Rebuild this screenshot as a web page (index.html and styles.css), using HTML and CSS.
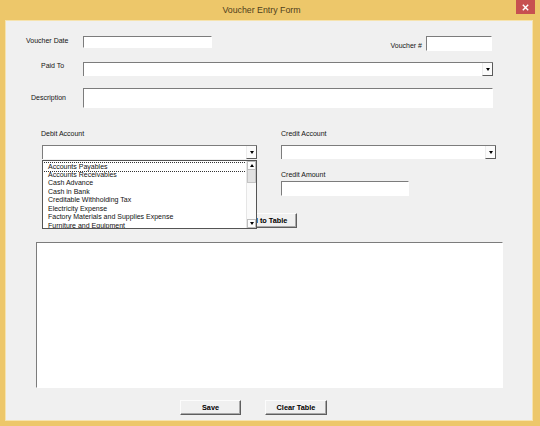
FILE: index.html
```html
<!DOCTYPE html>
<html>
<head>
<meta charset="utf-8">
<link rel="stylesheet" href="styles.css">
</head>
<body>
<div class="window">
  <div class="titlebar">
    <span class="title">Voucher Entry Form</span>
    <span class="close"><svg width="7" height="7" viewBox="0 0 7 7"><path d="M0.8 0.8 L6.2 6.2 M6.2 0.8 L0.8 6.2" stroke="#fff" stroke-width="1.4" fill="none"/></svg></span>
  </div>
  <div class="client">
    <div class="row r1">
      <span class="lbl lbl-vdate">Voucher Date</span>
      <div class="textbox tb-vdate"></div>
      <span class="lbl lbl-vno">Voucher #</span>
      <div class="textbox tb-vno"></div>
    </div>
    <div class="row r2">
      <span class="lbl lbl-paid">Paid To</span>
      <div class="combo cb-paid"><div class="cb-btn"><i class="tri-down"></i></div></div>
    </div>
    <div class="row r3">
      <span class="lbl lbl-desc">Description</span>
      <div class="textbox tb-desc"></div>
    </div>
    <div class="row r4">
      <span class="lbl lbl-debit">Debit Account</span>
      <span class="lbl">Credit Account</span>
    </div>
    <div class="row r5">
      <div class="combo cb-debit"><div class="cb-btn"><i class="tri-down"></i></div></div>
      <div class="combo cb-credit"><div class="cb-btn"><i class="tri-down"></i></div></div>
    </div>
    <div class="row r6">
      <span class="lbl">Credit Amount</span>
    </div>
    <div class="row r6b">
      <div class="textbox tb-amount"></div>
    </div>
    <div class="row r7">
      <div class="btn btn-add">Add to Table</div>
    </div>
    <div class="row r8">
      <div class="listbox"></div>
    </div>
    <div class="row r9">
      <div class="btn btn-save">Save</div>
      <div class="btn btn-clear">Clear Table</div>
    </div>

    <div class="dropdown">
      <ul class="items">
        <li class="focused">Accounts Payables</li>
        <li>Accounts Receivables</li>
        <li>Cash Advance</li>
        <li>Cash in Bank</li>
        <li>Creditable Withholding Tax</li>
        <li>Electricity Expense</li>
        <li>Factory Materials and Supplies Expense</li>
        <li>Furniture and Equipment</li>
      </ul>
      <div class="sb">
        <div class="sb-btn"><i class="tri-up"></i></div>
        <div class="sb-thumb"></div>
        <div class="sb-track"></div>
        <div class="sb-btn"><i class="tri-down"></i></div>
      </div>
    </div>
  </div>
</div>
</body>
</html>
```

FILE: styles.css
```css
* { box-sizing: border-box; }
html, body { margin: 0; padding: 0; }
body {
  width: 540px;
  height: 426px;
  overflow: hidden;
  font-family: "Liberation Sans", Arial, sans-serif;
  font-size: 7px;
  color: #141414;
  background: #edc76a;
}
.window {
  width: 540px;
  height: 426px;
  display: flex;
  flex-direction: column;
  background: #edc76a;
}
.titlebar {
  height: 20px;
  display: flex;
  align-items: flex-start;
}
.title {
  flex: 1;
  text-align: center;
  padding-left: 7px;
  font-size: 8.8px;
  line-height: 20px;
  color: #4f401c;
}
.close {
  width: 19px;
  height: 14px;
  margin-right: 5px;
  background: #c75050;
  display: flex;
  align-items: center;
  justify-content: center;
}
.close svg { display: block; }
.client {
  position: relative;
  height: 401px;
  margin: 0 7px 0 5px;
  background: #f0f0f0;
  box-shadow: inset 0 0 0 1px #f6e3ae;
  display: flex;
  flex-direction: column;
}
.row {
  display: flex;
  align-items: flex-start;
  flex: none;
}
.lbl {
  display: block;
  line-height: 12px;
  white-space: nowrap;
  flex: none;
}
.textbox, .combo, .listbox {
  background: #fff;
  border-style: solid;
  border-width: 1px;
  border-color: #7c7c7c #fff #fff #7c7c7c;
  flex: none;
}
.combo {
  display: flex;
  justify-content: flex-end;
  border-right: 0;
  border-bottom: 0;
}
.cb-btn {
  width: 11px;
  height: 100%;
  border-left: 1px solid #ececec;
  border-right: 1px solid #5a5a5a;
  border-bottom: 1px solid #5a5a5a;
  display: flex;
  align-items: center;
  justify-content: center;
  background: #fbfbfb;
}
.tri-down, .tri-up {
  display: block;
  width: 0;
  height: 0;
  border-left: 2.5px solid transparent;
  border-right: 2.5px solid transparent;
}
.tri-down { border-top: 3px solid #000; }
.tri-up { border-bottom: 3px solid #000; }

/* row 1 */
.r1 { margin-top: 16px; height: 14px; }
.lbl-vdate { margin-left: 21px; width: 57px; margin-top: -1.5px; }
.tb-vdate { width: 129px; height: 12px; }
.lbl-vno { width: 210px; text-align: right; margin-top: 3.7px; }
.tb-vno { margin-left: 4px; width: 66px; height: 15px; }

/* row 2 */
.r2 { margin-top: 12px; height: 14px; }
.lbl-paid { margin-left: 36px; width: 42px; margin-top: -2px; }
.cb-paid { width: 410px; height: 14px; }

/* row 3 */
.r3 { margin-top: 12px; height: 20px; }
.lbl-desc { margin-left: 26px; width: 52px; margin-top: 3.7px; }
.tb-desc { width: 410px; height: 20px; }

/* row 4 */
.r4 { margin-top: 20px; height: 12px; }
.lbl-debit { margin-left: 36px; width: 240px; }

/* row 5 */
.r5 { margin-top: 5px; height: 14px; }
.cb-debit { margin-left: 37px; width: 215px; height: 14px; }
.cb-credit { margin-left: 24px; width: 215px; height: 14px; }

/* row 6 */
.r6 { margin-top: 10px; height: 12px; padding-left: 276px; }
.r6b { height: 15px; }
.tb-amount { margin-left: 276px; width: 128px; height: 15px; }

/* row 7 */
.r7 { margin-top: 17px; height: 15px; }
.btn {
  flex: none;
  height: 15px;
  background: #f0f0f0;
  border-style: solid;
  border-width: 1px;
  border-color: #fcfcfc #5e5e5e #5e5e5e #fcfcfc;
  box-shadow: inset -1px -1px 0 #a8a8a8;
  font-weight: bold;
  font-size: 7.3px;
  color: #000;
  text-align: center;
  line-height: 13px;
}
.btn-add { margin-left: 229px; width: 63px; }

/* row 8 */
.r8 { margin-top: 14px; height: 146px; }
.listbox { margin-left: 31px; width: 467px; height: 146px; }

/* row 9 */
.r9 { margin-top: 12px; height: 15px; }
.btn-save { margin-left: 175px; width: 61px; }
.btn-clear { margin-left: 24px; width: 62px; }

/* open dropdown list (overlay) */
.dropdown {
  position: absolute;
  left: 37px;
  top: 140px;
  width: 215px;
  height: 69px;
  background: #fff;
  border: 1px solid #545454;
  display: flex;
  z-index: 2;
}
.items {
  list-style: none;
  margin: 0;
  padding: 1.5px 0 0;
  flex: 1;
  overflow: hidden;
}
.items li {
  height: 8.45px;
  line-height: 8.45px;
  padding-left: 5px;
  white-space: nowrap;
  color: #111;
}
.items li.focused {
  outline: 1px dotted #333;
  outline-offset: 0;
}
.sb {
  width: 10px;
  display: flex;
  flex-direction: column;
  background: #f4f4f4;
  border-left: 1px solid #e6e6e6;
}
.sb-btn {
  height: 9px;
  display: flex;
  align-items: center;
  justify-content: center;
  background: #fdfdfd;
  border: 1px solid #bdbdbd;
}
.sb-thumb {
  height: 13px;
  background: #e2e2e2;
  border: 1px solid #c4c4c4;
  border-top: 0;
}
.sb-track { flex: 1; background: #fafafa; }
```
